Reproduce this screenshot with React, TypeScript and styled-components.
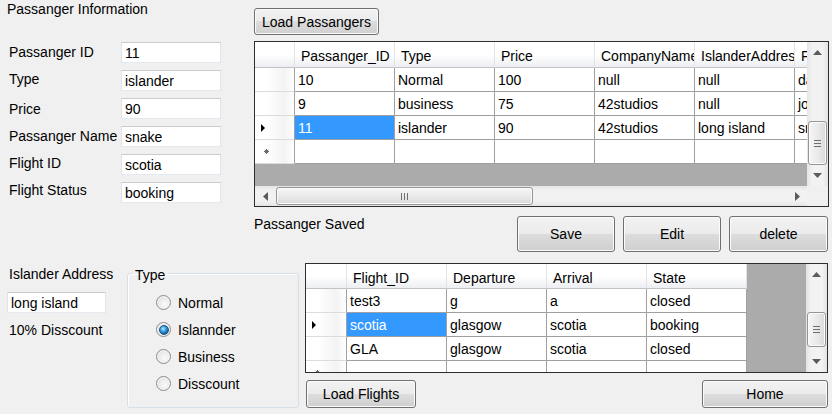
import React from "react";
import styled, { createGlobalStyle } from "styled-components";

const GlobalStyle = createGlobalStyle`
  html, body { margin: 0; padding: 0; background: #f0f0f0; }
  body { font-family: "Liberation Sans", Arial, sans-serif; font-size: 14px; color: #000; }
  * { box-sizing: border-box; }
`;

const Window = styled.div`
  width: 832px;
  height: 414px;
  overflow: hidden;
  background: #f0f0f0;
  display: flex;
  flex-direction: column;
  font-family: "Liberation Sans", Arial, sans-serif;
  font-size: 14px;
  line-height: 16px;
  color: #000;
`;

const TopSection = styled.div`
  display: flex;
  flex: none;
`;

const BottomSection = styled.div`
  display: flex;
  flex: none;
  margin-top: 11px;
`;

/* ---------- Left info form ---------- */
const InfoPane = styled.section`
  width: 254px;
  flex: none;
  padding: 1px 0 0 7px;
`;

const Title = styled.div`
  height: 16px;
  white-space: nowrap;
`;

const Form = styled.div`
  display: grid;
  grid-template-columns: 112px 100px;
  grid-auto-rows: 28px;
  margin-top: 25px;
  padding-left: 2px;
`;

const FieldLabel = styled.div<{ $dy: number }>`
  padding-top: ${(p) => p.$dy}px;
  white-space: nowrap;
`;

const TextBox = styled.input<{ $w: number }>`
  width: ${(p) => p.$w}px;
  height: 21px;
  margin: 0;
  padding: 0 3px;
  font: inherit;
  font-size: 14px;
  color: #000;
  background: #fff;
  border: 1px solid;
  border-color: #c9cbd1 #e2e3ea #e3e9ef #e2e3ea;
  outline: none;
`;

/* ---------- Buttons ---------- */
const Button = styled.button<{ $w: number; $h: number }>`
  width: ${(p) => p.$w}px;
  height: ${(p) => p.$h}px;
  flex: none;
  margin: 0;
  padding: 0;
  font: inherit;
  font-size: 14px;
  color: #000;
  border: 1px solid #707070;
  border-radius: 3px;
  background: linear-gradient(#f2f2f2 0%, #ebebeb 50%, #dddddd 50%, #cfcfcf 100%);
  box-shadow: inset 0 0 0 1px #fbfbfb;
`;

/* ---------- Right pane ---------- */
const RightPane = styled.section`
  width: 575px;
  flex: none;
  padding-top: 8px;
  display: flex;
  flex-direction: column;
  align-items: flex-start;
`;

const GridSpacer = styled.div`
  height: 6px;
  flex: none;
`;

const StatusRow = styled.div`
  width: 575px;
  margin-top: 9px;
  padding-right: 1px;
  display: flex;
  justify-content: space-between;
  align-items: flex-start;
`;

const StatusText = styled.div`
  white-space: nowrap;
`;

const ActionGroup = styled.div`
  display: flex;
  gap: 8px;
`;

/* ---------- Data grid ---------- */
const GridFrame = styled.div<{ $w: number; $h: number; $hs: boolean }>`
  width: ${(p) => p.$w}px;
  height: ${(p) => p.$h}px;
  flex: none;
  border: 1px solid #2e2e2e;
  display: grid;
  grid-template-columns: minmax(0, 1fr) 21px;
  grid-template-rows: ${(p) => (p.$hs ? "minmax(0, 1fr) 20px" : "minmax(0, 1fr)")};
  background: #f0f0f0;
`;

const Viewport = styled.div`
  overflow: hidden;
  background: #ababab;
  display: flex;
  flex-direction: column;
  min-width: 0;
  min-height: 0;
`;

const GridRow = styled.div<{ $h: number }>`
  display: flex;
  flex: none;
  height: ${(p) => p.$h}px;
`;

const HeaderCell = styled.div<{ $w: number }>`
  flex: none;
  width: ${(p) => p.$w}px;
  height: 100%;
  padding: 3px 0 0 6px;
  display: flex;
  align-items: center;
  white-space: nowrap;
  overflow: hidden;
  background: linear-gradient(#ffffff 0%, #ffffff 50%, #f4f5f7 80%, #eceef1 100%);
  border-right: 1px solid #e2e3e6;
  border-bottom: 1px solid #c3c3c3;
`;

const RowHeaderCell = styled.div<{ $w: number; $pad: number }>`
  flex: none;
  width: ${(p) => p.$w}px;
  height: 100%;
  padding-left: ${(p) => p.$pad}px;
  display: flex;
  align-items: center;
  background: linear-gradient(to right, #ffffff 0%, #ffffff 30%, #f3f3f3 75%, #ffffff 100%);
  border-right: 1px solid #a0a0a0;
  border-bottom: 1px solid #dcdcdc;
`;

const Cell = styled.div<{ $w: number; $sel: boolean }>`
  flex: none;
  width: ${(p) => p.$w}px;
  height: 100%;
  padding-left: 3px;
  display: flex;
  align-items: center;
  white-space: nowrap;
  overflow: hidden;
  background: ${(p) => (p.$sel ? "#3399ff" : "#ffffff")};
  color: ${(p) => (p.$sel ? "#ffffff" : "#000000")};
  border-right: 1px solid #a0a0a0;
  border-bottom: 1px solid #a0a0a0;
`;

/* ---------- Scrollbars ---------- */
const VScroll = styled.div`
  grid-column: 2;
  grid-row: 1;
  display: flex;
  flex-direction: column;
  background: linear-gradient(to right, #e4e4e4 0%, #f2f2f2 25%, #f2f2f2 75%, #e4e4e4 100%);
  min-height: 0;
`;

const HScroll = styled.div`
  grid-column: 1;
  grid-row: 2;
  display: flex;
  background: linear-gradient(#e4e4e4 0%, #f2f2f2 25%, #f2f2f2 75%, #e4e4e4 100%);
  min-width: 0;
`;

const Corner = styled.div`
  grid-column: 2;
  grid-row: 2;
  background: #f0f0f0;
`;

const ScrollButton = styled.div<{ $size: number }>`
  flex: none;
  width: ${(p) => p.$size}px;
  height: ${(p) => p.$size}px;
  display: flex;
  align-items: center;
  justify-content: center;
`;

const HScrollButton = styled.div`
  flex: none;
  width: 20px;
  height: 20px;
  display: flex;
  align-items: center;
  justify-content: center;
`;

const VTrack = styled.div`
  flex: 1;
  display: flex;
  flex-direction: column;
  padding: 0 1px;
  min-height: 0;
`;

const HTrack = styled.div`
  flex: 1;
  display: flex;
  padding: 1px 0;
  min-width: 0;
`;

const VThumb = styled.div<{ $top: number | null; $h: number }>`
  flex: none;
  margin-top: ${(p) => (p.$top === null ? "auto" : `${p.$top}px`)};
  height: ${(p) => p.$h}px;
  border: 1px solid #959595;
  border-radius: 3px;
  background: linear-gradient(to right, #f6f6f6 0%, #eaeaea 50%, #dadada 100%);
  box-shadow: inset 0 0 0 1px #fbfbfb;
  display: flex;
  align-items: center;
  justify-content: center;
`;

const HThumb = styled.div<{ $left: number; $w: number }>`
  flex: none;
  margin-left: ${(p) => p.$left}px;
  width: ${(p) => p.$w}px;
  border: 1px solid #959595;
  border-radius: 3px;
  background: linear-gradient(#f6f6f6 0%, #eaeaea 50%, #dadada 100%);
  box-shadow: inset 0 0 0 1px #fbfbfb;
  display: flex;
  align-items: center;
  justify-content: center;
`;

const ArrowUp = () => (
  <svg width="9" height="5" viewBox="0 0 9 5">
    <polygon points="4.5,0 9,5 0,5" fill="#5c5c5c" />
  </svg>
);
const ArrowDown = () => (
  <svg width="9" height="5" viewBox="0 0 9 5">
    <polygon points="0,0 9,0 4.5,5" fill="#5c5c5c" />
  </svg>
);
const ArrowLeft = () => (
  <svg width="5" height="9" viewBox="0 0 5 9">
    <polygon points="0,4.5 5,0 5,9" fill="#5c5c5c" />
  </svg>
);
const ArrowRight = () => (
  <svg width="5" height="9" viewBox="0 0 5 9">
    <polygon points="0,0 5,4.5 0,9" fill="#5c5c5c" />
  </svg>
);
const GripV = () => (
  <svg width="7" height="7" viewBox="0 0 7 7">
    <path d="M0 0.5h7M0 3.5h7M0 6.5h7" stroke="#6e6e6e" strokeWidth="1" />
  </svg>
);
const GripH = () => (
  <svg width="7" height="7" viewBox="0 0 7 7">
    <path d="M0.5 0v7M3.5 0v7M6.5 0v7" stroke="#6e6e6e" strokeWidth="1" />
  </svg>
);
const RowPointer = () => (
  <svg width="4" height="8" viewBox="0 0 4 8">
    <polygon points="0,0 4,4 0,8" fill="#000" />
  </svg>
);
const NewRowStar = () => (
  <svg width="5" height="5" viewBox="0 0 5 5">
    <path d="M2.5 0v5M0 2.5h5M0.8 0.8l3.4 3.4M4.2 0.8l-3.4 3.4" stroke="#6a6a6a" strokeWidth="1" />
  </svg>
);

type Col = { title: string; width: number };

interface GridProps {
  columns: Col[];
  rows: string[][];
  current: number;
  selectedCol: number;
  width: number;
  height: number;
  headerHeight: number;
  rowHeight: number;
  rowHeaderWidth: number;
  vThumb: { top: number | null; height: number };
  hThumb?: { left: number; width: number };
}

const DataGrid: React.FC<GridProps> = ({
  columns,
  rows,
  current,
  selectedCol,
  width,
  height,
  headerHeight,
  rowHeight,
  rowHeaderWidth,
  vThumb,
  hThumb,
}) => (
  <GridFrame $w={width} $h={height} $hs={!!hThumb}>
    <Viewport>
      <GridRow $h={headerHeight}>
        <HeaderCell $w={rowHeaderWidth} />
        {columns.map((c) => (
          <HeaderCell key={c.title} $w={c.width}>
            {c.title}
          </HeaderCell>
        ))}
      </GridRow>
      {rows.map((r, i) => (
        <GridRow key={i} $h={rowHeight}>
          <RowHeaderCell $w={rowHeaderWidth} $pad={6}>
            {i === current && <RowPointer />}
          </RowHeaderCell>
          {columns.map((c, j) => (
            <Cell key={c.title} $w={c.width} $sel={i === current && j === selectedCol}>
              {r[j]}
            </Cell>
          ))}
        </GridRow>
      ))}
      <GridRow $h={rowHeight}>
        <RowHeaderCell $w={rowHeaderWidth} $pad={9}>
          <NewRowStar />
        </RowHeaderCell>
        {columns.map((c) => (
          <Cell key={c.title} $w={c.width} $sel={false} />
        ))}
      </GridRow>
    </Viewport>
    <VScroll>
      <ScrollButton $size={21}>
        <ArrowUp />
      </ScrollButton>
      <VTrack>
        <VThumb $top={vThumb.top} $h={vThumb.height}>
          <GripV />
        </VThumb>
      </VTrack>
      <ScrollButton $size={21}>
        <ArrowDown />
      </ScrollButton>
    </VScroll>
    {hThumb && (
      <>
        <HScroll>
          <HScrollButton>
            <ArrowLeft />
          </HScrollButton>
          <HTrack>
            <HThumb $left={hThumb.left} $w={hThumb.width}>
              <GripH />
            </HThumb>
          </HTrack>
          <HScrollButton>
            <ArrowRight />
          </HScrollButton>
        </HScroll>
        <Corner />
      </>
    )}
  </GridFrame>
);

/* ---------- Bottom left ---------- */
const BottomLeft = styled.div`
  display: flex;
  flex: none;
  width: 299px;
`;

const AddressCol = styled.div`
  width: 127px;
  flex: none;
  padding: 3px 0 0 7px;
  display: flex;
  flex-direction: column;
  align-items: flex-start;
`;

const PlainText = styled.div<{ $mt: number }>`
  margin-top: ${(p) => p.$mt}px;
  padding-left: 2px;
  white-space: nowrap;
`;

const AddressBox = styled(TextBox)`
  margin-top: 10px;
`;

const GroupBox = styled.fieldset`
  width: 172px;
  height: 144px;
  flex: none;
  margin: 1px 0 0 0;
  padding: 0;
  border: 1px solid #d5dfe5;
  border-radius: 3px;
  box-shadow: inset 1px 1px 0 #ffffff;
  min-width: 0;
`;

const GroupLegend = styled.legend`
  margin-left: 5px;
  padding: 3px 2px 0;
  line-height: 16px;
`;

const RadioList = styled.div`
  padding: 6px 0 0 28px;
  display: flex;
  flex-direction: column;
`;

const RadioRow = styled.label`
  height: 27px;
  display: flex;
  align-items: center;
  gap: 7px;
  white-space: nowrap;
`;

const RadioCircle = styled.span<{ $checked: boolean }>`
  width: 15px;
  height: 15px;
  flex: none;
  border-radius: 50%;
  border: 1px solid #8a8b8c;
  background: radial-gradient(circle at 60% 60%, #fafafa 0%, #ececec 45%, #d6d6d6 100%);
  box-shadow: inset 0 0 0 1px #f8f8f8;
  display: flex;
  align-items: center;
  justify-content: center;
  &::after {
    content: "";
    display: ${(p) => (p.$checked ? "block" : "none")};
    width: 8px;
    height: 8px;
    border-radius: 50%;
    border: 1px solid #1a4f7d;
    background: radial-gradient(circle at 40% 35%, #b8ecff 0%, #3fa5e6 35%, #125a9c 75%, #0b3a66 100%);
  }
`;

/* ---------- Bottom right ---------- */
const BottomRight = styled.div`
  width: 523px;
  flex: none;
  margin-left: 6px;
  display: flex;
  flex-direction: column;
`;

const FlightButtons = styled.div`
  margin-top: 7px;
  padding-left: 1px;
  display: flex;
  justify-content: space-between;
`;

const formRows = [
  { label: "Passanger ID", value: "11", dy: 2 },
  { label: "Type", value: "islander", dy: 1 },
  { label: "Price", value: "90", dy: 3 },
  { label: "Passanger Name", value: "snake", dy: 2 },
  { label: "Flight ID", value: "scotia", dy: 1 },
  { label: "Flight Status", value: "booking", dy: 0 },
];

const passengerCols: Col[] = [
  { title: "Passanger_ID", width: 100 },
  { title: "Type", width: 100 },
  { title: "Price", width: 100 },
  { title: "CompanyName", width: 100 },
  { title: "IslanderAddress", width: 100 },
  { title: "FullName", width: 100 },
];

const passengerRows = [
  ["10", "Normal", "100", "null", "null", "dave"],
  ["9", "business", "75", "42studios", "null", "john"],
  ["11", "islander", "90", "42studios", "long island", "snake"],
];

const flightCols: Col[] = [
  { title: "Flight_ID", width: 100 },
  { title: "Departure", width: 100 },
  { title: "Arrival", width: 100 },
  { title: "State", width: 100 },
];

const flightRows = [
  ["test3", "g", "a", "closed"],
  ["scotia", "glasgow", "scotia", "booking"],
  ["GLA", "glasgow", "scotia", "closed"],
];

const radios = [
  { label: "Normal", checked: false },
  { label: "Islannder", checked: true },
  { label: "Business", checked: false },
  { label: "Disscount", checked: false },
];

export default function App() {
  return (
    <>
      <GlobalStyle />
      <Window>
        <TopSection>
          <InfoPane>
            <Title>Passanger Information</Title>
            <Form>
              {formRows.map((r) => (
                <React.Fragment key={r.label}>
                  <FieldLabel $dy={r.dy}>{r.label}</FieldLabel>
                  <TextBox $w={100} defaultValue={r.value} readOnly />
                </React.Fragment>
              ))}
            </Form>
          </InfoPane>
          <RightPane>
            <Button $w={125} $h={27}>Load Passangers</Button>
            <GridSpacer />
            <DataGrid
              columns={passengerCols}
              rows={passengerRows}
              current={2}
              selectedCol={0}
              width={575}
              height={166}
              headerHeight={26}
              rowHeight={24}
              rowHeaderWidth={40}
              vThumb={{ top: null, height: 44 }}
              hThumb={{ left: 1, width: 257 }}
            />
            <StatusRow>
              <StatusText>Passanger Saved</StatusText>
              <ActionGroup>
                <Button $w={98} $h={36}>Save</Button>
                <Button $w={98} $h={36}>Edit</Button>
                <Button $w={99} $h={36}>delete</Button>
              </ActionGroup>
            </StatusRow>
          </RightPane>
        </TopSection>
        <BottomSection>
          <BottomLeft>
            <AddressCol>
              <PlainText $mt={0}>Islander Address</PlainText>
              <AddressBox $w={99} defaultValue="long island" readOnly />
              <PlainText $mt={9}>10% Disscount</PlainText>
            </AddressCol>
            <GroupBox>
              <GroupLegend>Type</GroupLegend>
              <RadioList>
                {radios.map((r) => (
                  <RadioRow key={r.label}>
                    <RadioCircle $checked={r.checked} />
                    {r.label}
                  </RadioRow>
                ))}
              </RadioList>
            </GroupBox>
          </BottomLeft>
          <BottomRight>
            <DataGrid
              columns={flightCols}
              rows={flightRows}
              current={1}
              selectedCol={0}
              width={523}
              height={110}
              headerHeight={25}
              rowHeight={24}
              rowHeaderWidth={41}
              vThumb={{ top: 27, height: 35 }}
            />
            <FlightButtons>
              <Button $w={110} $h={28}>Load Flights</Button>
              <Button $w={126} $h={28}>Home</Button>
            </FlightButtons>
          </BottomRight>
        </BottomSection>
      </Window>
    </>
  );
}
